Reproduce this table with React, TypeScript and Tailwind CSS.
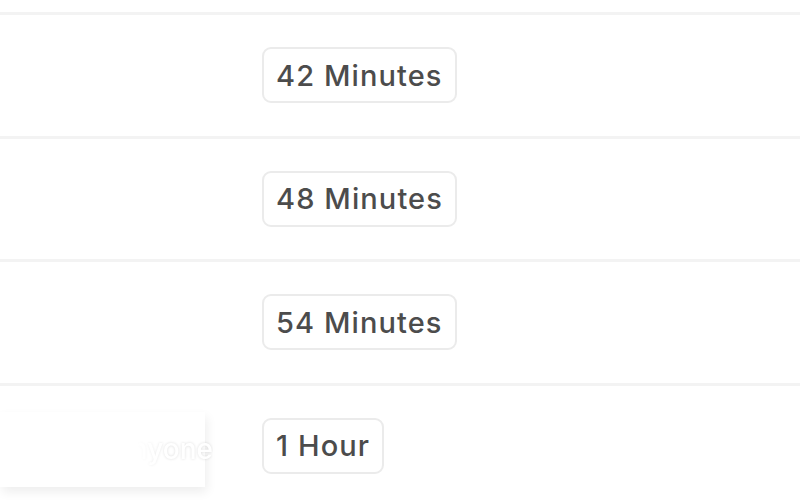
const rows = ["42 Minutes", "48 Minutes", "54 Minutes", "1 Hour"];

const Badge = ({ label }: { label: string }) => (
  <div className="h-[56px] px-[12px] flex items-center rounded-[9px] border-2 border-[#ebebeb] bg-white text-[29px] font-medium text-[#4c4c4c] tracking-[1.1px]">
    {label}
  </div>
);

export default function App() {
  return (
    <div
      className="w-[800px] h-[500px] bg-white overflow-hidden flex flex-col"
      style={{ fontFamily: "Inter, 'Noto Sans', sans-serif" }}
    >
      <div className="h-[12px] shrink-0" />
      {rows.map((label, i) => (
        <div
          key={label}
          className="h-[123.5px] shrink-0 border-t-[3px] border-[#f3f3f3] flex items-center relative"
        >
          {i === 3 && (
            <div className="absolute left-0 top-[26px] w-[205px] h-[75px] bg-white shadow-[2px_5px_10px_rgba(0,0,0,0.07)] flex items-center justify-end">
              <span className="text-[28px] font-medium text-white translate-x-[8px] [text-shadow:0_0_3px_rgba(0,0,0,0.14)] [mask-image:linear-gradient(to_right,transparent_25%,black_55%)]">
                Anyone
              </span>
            </div>
          )}
          <div className="ml-[262px]">
            <Badge label={label} />
          </div>
        </div>
      ))}
    </div>
  );
}
